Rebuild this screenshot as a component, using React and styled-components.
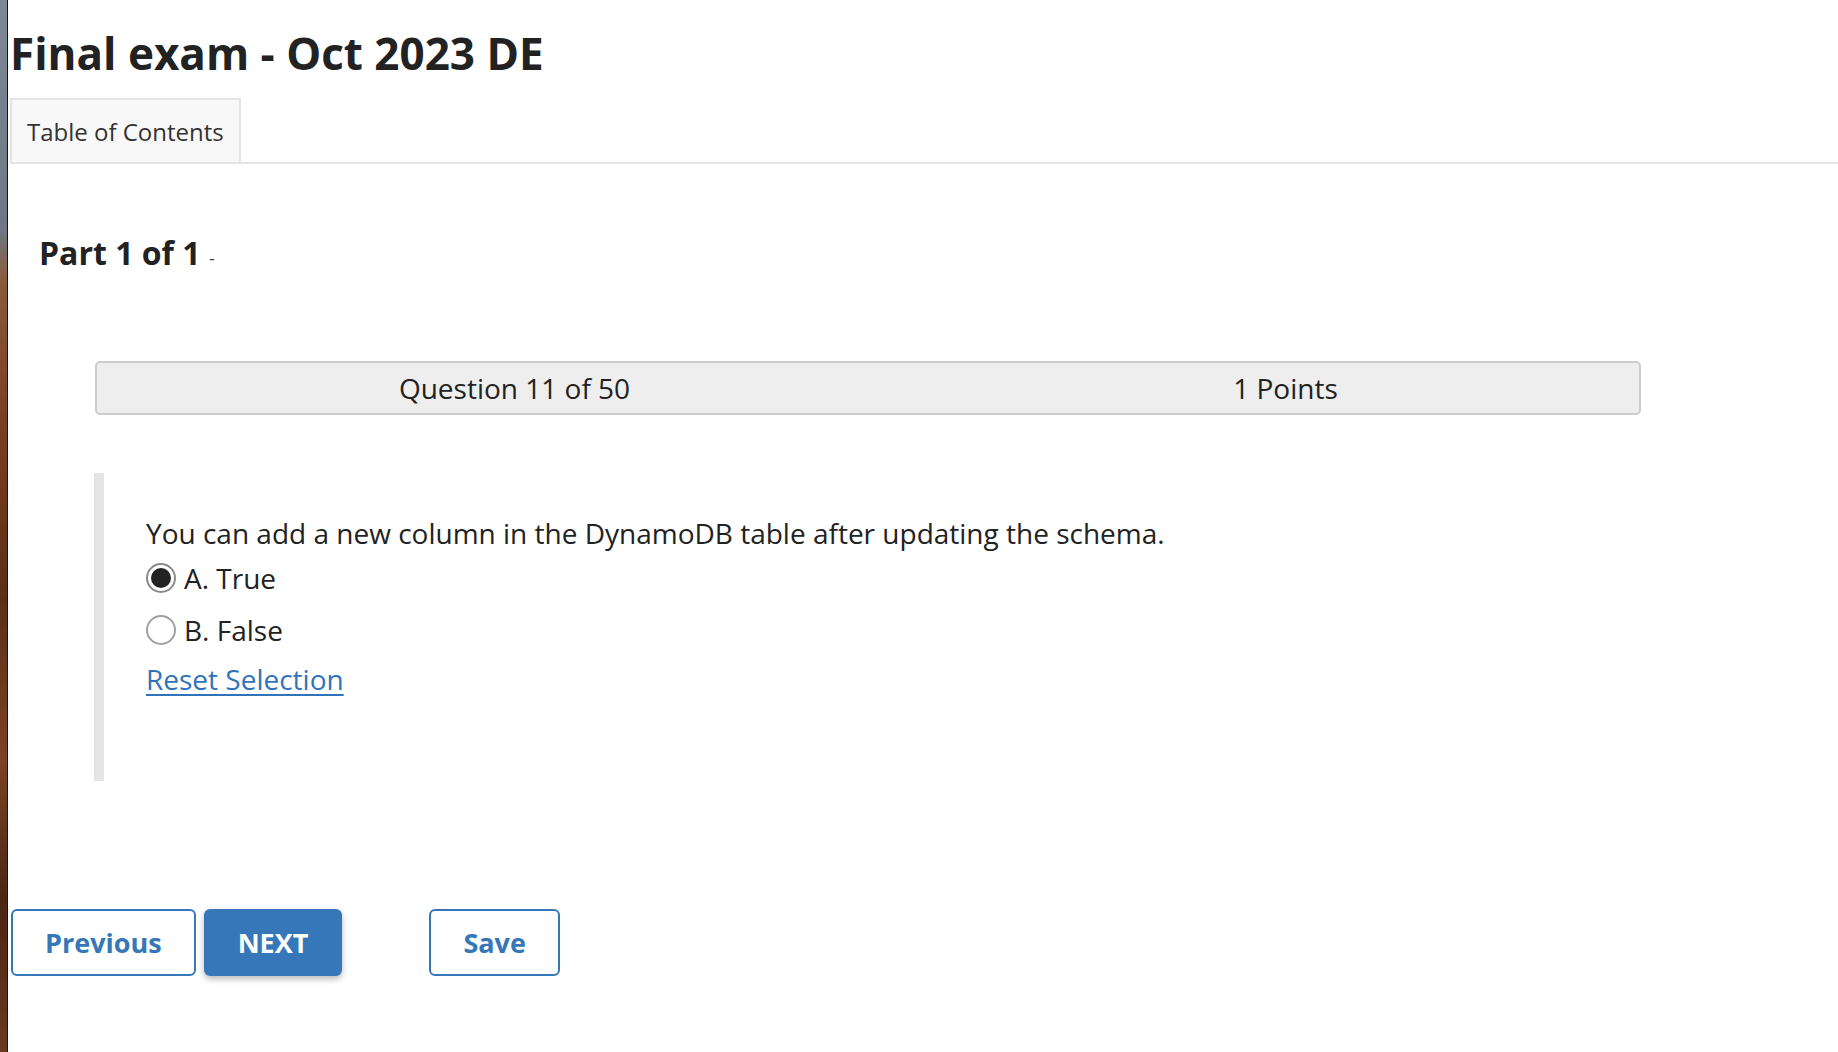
import React, { useState } from "react";
import styled, { createGlobalStyle } from "styled-components";

const GlobalStyle = createGlobalStyle`
  html, body {
    margin: 0;
    padding: 0;
    background: #ffffff;
  }
  body {
    font-family: "Open Sans", "Noto Sans", "Liberation Sans", sans-serif;
    color: #262626;
  }
`;

const options = [
  { id: "a", label: "A. True" },
  { id: "b", label: "B. False" },
];

function App() {
  const [choice, setChoice] = useState("a");

  return (
    <Page>
      <GlobalStyle />
      <Wallpaper />
      <Main>
        <Title>Final exam - Oct 2023 DE</Title>
        <TabBar>
          <Tab>Table of Contents</Tab>
        </TabBar>
        <PartHeading>
          Part 1 of 1 <PartDash>-</PartDash>
        </PartHeading>

        <QuestionBar>
          <BarCell>Question 11 of 50</BarCell>
          <BarCell>1 Points</BarCell>
        </QuestionBar>

        <QuestionBlock>
          <Prompt>
            You can add a new column in the DynamoDB table after updating the
            schema.
          </Prompt>
          {options.map((o) => (
            <Option key={o.id} onClick={() => setChoice(o.id)}>
              <Radio checked={choice === o.id} />
              <span>{o.label}</span>
            </Option>
          ))}
          <ResetLink href="#" onClick={(e) => { e.preventDefault(); setChoice(null); }}>
            Reset Selection
          </ResetLink>
        </QuestionBlock>

        <ButtonRow>
          <Button>Previous</Button>
          <Button $primary>NEXT</Button>
          <Button $gap>Save</Button>
        </ButtonRow>
      </Main>
    </Page>
  );
}

const Page = styled.div`
  display: flex;
  min-height: 1052px;
`;

const Wallpaper = styled.div`
  width: 7px;
  flex-shrink: 0;
  border-right: 1px solid #1a1410;
  background: linear-gradient(
    to bottom,
    #7d8796 0px,
    #6f7784 230px,
    #8a5a3c 280px,
    #7a3f22 420px,
    #5c2e18 600px,
    #7b4326 760px,
    #4a2614 900px,
    #6a3820 1052px
  );
`;

const Main = styled.div`
  flex: 1;
  padding: 0 0 0 2px;
`;

const Title = styled.h1`
  margin: 0;
  padding-top: 23px;
  font-size: 44px;
  line-height: 60px;
  font-weight: 700;
  color: #222222;
`;

const TabBar = styled.div`
  display: flex;
  margin-top: 15px;
  border-bottom: 2px solid #e4e4e4;
`;

const Tab = styled.div`
  padding: 0 15px;
  height: 62px;
  display: flex;
  align-items: center;
  font-size: 24px;
  color: #333333;
  background: #f8f8f8;
  border: 2px solid #e4e4e4;
  border-bottom: none;
`;

const PartHeading = styled.h2`
  margin: 0;
  padding: 67px 0 0 29px;
  font-size: 32px;
  line-height: 44px;
  font-weight: 700;
  color: #222222;
`;

const PartDash = styled.span`
  font-size: 18px;
  font-weight: 400;
  color: #444444;
`;

const QuestionBar = styled.div`
  display: flex;
  margin: 81px 0 0 85px;
  width: 1546px;
  height: 54px;
  box-sizing: border-box;
  background: #eeeeee;
  border: 2px solid #cccccc;
  border-radius: 5px;
`;

const BarCell = styled.div`
  flex: 1;
  display: flex;
  align-items: center;
  justify-content: center;
  padding-left: 64px;
  font-size: 28px;
  color: #222222;
`;

const QuestionBlock = styled.div`
  margin: 58px 0 0 84px;
  height: 308px;
  box-sizing: border-box;
  border-left: 10px solid #e4e4e4;
  padding: 42px 0 0 42px;
  display: flex;
  flex-direction: column;
  align-items: flex-start;
`;

const Prompt = styled.p`
  margin: 0;
  font-size: 28px;
  line-height: 37px;
  color: #222222;
`;

const Option = styled.label`
  display: flex;
  align-items: center;
  gap: 8px;
  height: 52px;
  font-size: 28px;
  color: #222222;
  cursor: pointer;
`;

const Radio = styled.span`
  position: relative;
  width: 30px;
  height: 30px;
  box-sizing: border-box;
  border-radius: 50%;
  border: 2px solid ${(p) => (p.checked ? "#8a8a8a" : "#a0a0a0")};
  background: #ffffff;
  flex-shrink: 0;
  &::after {
    content: "";
    position: absolute;
    inset: 3px;
    border-radius: 50%;
    background: ${(p) => (p.checked ? "#222222" : "transparent")};
  }
`;

const ResetLink = styled.a`
  margin-top: 4px;
  font-size: 28px;
  line-height: 38px;
  color: #2f74bb;
  text-decoration: underline;
  text-underline-offset: 4px;
`;

const ButtonRow = styled.div`
  display: flex;
  align-items: center;
  margin-top: 128px;
  padding-left: 1px;
  gap: 8px;
`;

const Button = styled.button`
  height: 67px;
  padding: 0 32px;
  margin-left: ${(p) => (p.$gap ? "79px" : "0")};
  font-family: "Open Sans", "Noto Sans", "Liberation Sans", sans-serif;
  font-size: 27px;
  font-weight: 700;
  border-radius: 6px;
  border: 2px solid #3577b9;
  color: ${(p) => (p.$primary ? "#ffffff" : "#3577b9")};
  background: ${(p) => (p.$primary ? "#3577b9" : "#ffffff")};
  box-shadow: ${(p) => (p.$primary ? "0 3px 6px rgba(0,0,0,0.28)" : "none")};
  cursor: pointer;
`;

export default App;
